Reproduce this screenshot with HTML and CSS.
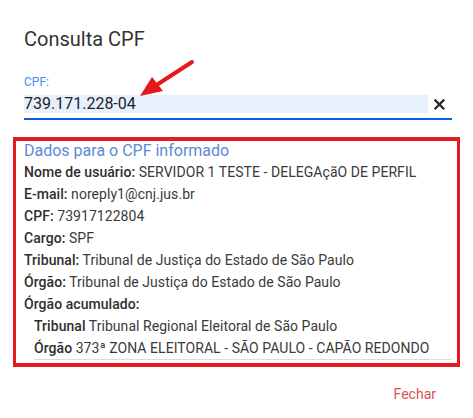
FILE: index.html
```html
<!DOCTYPE html>
<html lang="pt-BR">
<head>
<meta charset="utf-8">
<title>Consulta CPF</title>
<link rel="stylesheet" href="styles.css">
</head>
<body>
<div class="dialog">
  <h1 class="title">Consulta CPF</h1>
  <div class="field">
    <label class="field-label">CPF:</label>
    <div class="field-row">
      <div class="field-input">739.171.228-04</div>
      <svg class="clear-icon" viewBox="0 0 18 18" width="18" height="18"><path d="M4.6 4.6L14.2 14.2M14.2 4.6L4.6 14.2"/></svg>
    </div>
    <div class="field-underline"></div>
  </div>
  <div class="result">
    <div class="result-title">Dados para o CPF informado</div>
    <div class="row"><b>Nome de usuário:</b> SERVIDOR 1 TESTE - DELEGAçãO DE PERFIL</div>
    <div class="row"><b>E-mail:</b> noreply1@cnj.jus.br</div>
    <div class="row"><b>CPF:</b> 73917122804</div>
    <div class="row"><b>Cargo:</b> SPF</div>
    <div class="row"><b>Tribunal:</b> Tribunal de Justiça do Estado de São Paulo</div>
    <div class="row"><b>Órgão:</b> Tribunal de Justiça do Estado de São Paulo</div>
    <div class="row"><b>Órgão acumulado:</b></div>
    <div class="sub">
      <div class="row"><b>Tribunal</b> Tribunal Regional Eleitoral de São Paulo</div>
      <div class="row"><b>Órgão</b> 373ª ZONA ELEITORAL - SÃO PAULO - CAPÃO REDONDO</div>
    </div>
  </div>
  <div class="actions"><button class="btn-close">Fechar</button></div>
  <svg class="arrow" viewBox="0 0 473 418" width="473" height="418">
    <line x1="192" y1="62" x2="155" y2="86" stroke="#e3191c" stroke-width="4" stroke-linecap="round"/>
    <polygon points="140,96 152,77 163,91" fill="#e3191c"/>
  </svg>
</div>
</body>
</html>
```
FILE: styles.css
```css
* { box-sizing: border-box; }
html, body { margin: 0; padding: 0; background: #fff; }
body { font-family: Roboto, "Liberation Sans", Arial, sans-serif; color: #333; }

.dialog {
  position: relative;
  width: 473px;
  height: 418px;
  padding: 27px 21px 0 24px;
}

.title {
  margin: 0;
  font-size: 20px;
  line-height: 24px;
  font-weight: 400;
  color: #333;
}

.field { margin-top: 23px; }
.field-label {
  display: block;
  font-size: 12px;
  line-height: 16px;
  color: #4b8bf4;
}
.field-row {
  display: flex;
  align-items: center;
  margin-top: 5px;
  height: 18px;
}
.field-input {
  width: 404px;
  height: 18px;
  background: #e8f0fe;
  font-size: 16px;
  line-height: 18px;
  color: #222;
}
.clear-icon {
  margin-left: 2px;
  flex: none;
  fill: none;
  stroke: #2b2b2b;
  stroke-width: 2.3;
}
.field-underline {
  margin-top: 5px;
  height: 2px;
  background: #0b5ee6;
}

.result {
  margin: 17px -8px 0 -11px;
  border: solid #e41b1f;
  border-width: 4px 3px;
  padding: 0 5px 3px 8px;
}
.result-title {
  font-size: 16px;
  line-height: 20px;
  color: #5a8ad6;
}
.row {
  font-size: 14px;
  line-height: 22px;
  color: #3a3a3a;
  white-space: nowrap;
  letter-spacing: 0.05px;
}
.row b { font-weight: 500; color: #2e2e2e; }
.sub {
  margin-left: 10px;
  border-bottom: 1px solid #ddd;
}

.actions {
  display: flex;
  justify-content: flex-end;
  margin-top: 9px;
}
.btn-close {
  border: 0;
  background: none;
  font-family: inherit;
  font-size: 14px;
  line-height: 36px;
  padding: 0 16px;
  color: #d9534f;
}

.arrow {
  position: absolute;
  left: 0;
  top: 0;
  pointer-events: none;
}
```
